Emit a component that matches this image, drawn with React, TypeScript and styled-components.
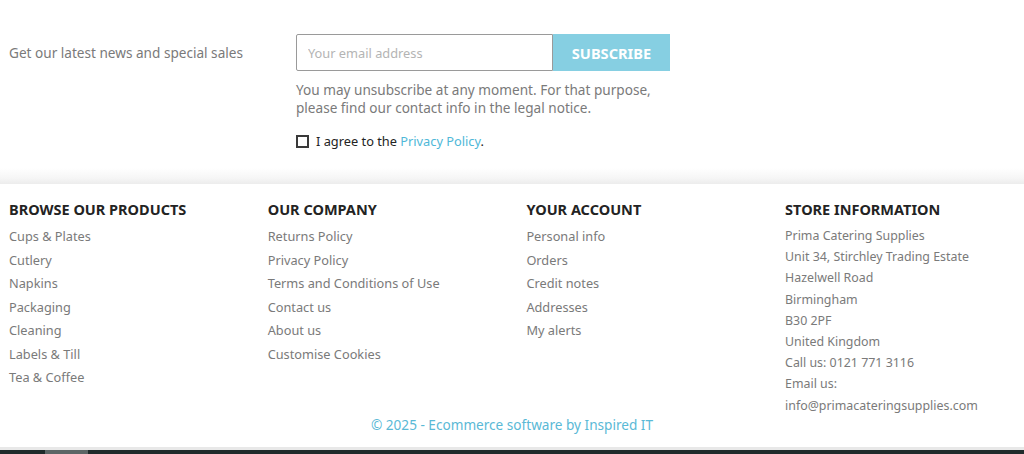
import React from 'react'
import styled, { createGlobalStyle } from 'styled-components'

const GlobalStyle = createGlobalStyle`
    html, body {
        margin: 0;
        padding: 0;
        background: #fff;
        font-family: "Noto Sans", "Open Sans", sans-serif;
        overflow: hidden;
    }
    * { box-sizing: border-box; }
`

const Page = styled.div`
    width: 1024px;
    height: 454px;
    display: flex;
    flex-direction: column;
`

const Newsletter = styled.section`
    display: flex;
    padding: 34px 0 0 9px;
    height: 184px;
    background: linear-gradient(to bottom, #fff 0, #fff 168px, #f6f6f6 178px, #ececec 184px);
`

const Pitch = styled.p`
    margin: 9px 0 0;
    width: 287px;
    font-size: 13.6px;
    color: #7a7a7a;
`

const FormCol = styled.div`
    display: flex;
    flex-direction: column;
`

const InputRow = styled.div`
    display: flex;
    height: 37px;
`

const EmailInput = styled.input`
    width: 257px;
    height: 37px;
    border: 1px solid #9a9a9a;
    border-radius: 2px 0 0 2px;
    padding: 0 11px;
    font-family: inherit;
    font-size: 12.8px;
    color: #232323;
    outline: none;
    &::placeholder { color: #b4b4b4; }
`

const SubscribeButton = styled.button`
    width: 117px;
    height: 37px;
    border: none;
    background: #86cfe2;
    color: #fff;
    font-family: inherit;
    font-weight: 700;
    font-size: 14.6px;
    text-transform: uppercase;
    padding: 0;
`

const Notice = styled.p`
    margin: 10px 0 0;
    width: 370px;
    font-size: 13.6px;
    line-height: 18px;
    color: #7a7a7a;
`

const Agree = styled.label`
    display: flex;
    align-items: center;
    gap: 7px;
    margin-top: 15px;
    font-size: 12.8px;
    color: #232323;
`

const Box = styled.span`
    width: 13px;
    height: 13px;
    border: 2px solid #3a3a3a;
`

const Link = styled.a`
    color: #4fb8d8;
    text-decoration: none;
`

const Footer = styled.footer`
    flex: 1;
    display: flex;
    flex-direction: column;
    padding: 16px 0 0 9px;
`

const Columns = styled.div`
    display: grid;
    grid-template-columns: repeat(4, 258.7px);
`

const Heading = styled.h4`
    margin: 0 0 7px;
    font-size: 14.5px;
    font-weight: 700;
    text-transform: uppercase;
    color: #232323;
    line-height: 18px;
`

const List = styled.ul`
    list-style: none;
    margin: 0;
    padding: 0;
`

const Item = styled.li`
    font-size: 12.75px;
    line-height: 23.5px;
    color: #7a7a7a;
`

const InfoList = styled.div`
    margin-top: 4px;
`

const InfoLine = styled.div`
    font-size: 12.4px;
    line-height: 21.2px;
    color: #7a7a7a;
`

const Copyright = styled.p`
    margin: -1px 0 0;
    text-align: center;
    font-size: 13.6px;
    line-height: 19px;
    color: #5ab9d6;
    padding-right: 9px;
`

const BottomLine = styled.div`
    height: 3px;
    background: #e8e8e8;
`

const TaskBar = styled.div`
    height: 4px;
    background: #1f2b2b;
    display: flex;
    padding-left: 45px;
`

const TaskItem = styled.span`
    width: 43px;
    background: #5c6666;
`

const products = ['Cups & Plates', 'Cutlery', 'Napkins', 'Packaging', 'Cleaning', 'Labels & Till', 'Tea & Coffee']
const company = ['Returns Policy', 'Privacy Policy', 'Terms and Conditions of Use', 'Contact us', 'About us', 'Customise Cookies']
const account = ['Personal info', 'Orders', 'Credit notes', 'Addresses', 'My alerts']
const store = [
    'Prima Catering Supplies',
    'Unit 34, Stirchley Trading Estate',
    'Hazelwell Road',
    'Birmingham',
    'B30 2PF',
    'United Kingdom',
    'Call us: 0121 771 3116',
    'Email us:',
    'info@primacateringsupplies.com',
]

const LinkBlock: React.FC<{ title: string, items: string[] }> = ({ title, items }) => (
    <div>
        <Heading>{title}</Heading>
        <List>
            {items.map(i => <Item key={i}>{i}</Item>)}
        </List>
    </div>
)

const App: React.FC = () => {
    return (
        <Page>
            <GlobalStyle />
            <Newsletter>
                <Pitch>Get our latest news and special sales</Pitch>
                <FormCol>
                    <InputRow>
                        <EmailInput placeholder="Your email address" />
                        <SubscribeButton>Subscribe</SubscribeButton>
                    </InputRow>
                    <Notice>You may unsubscribe at any moment. For that purpose, please find our contact info in the legal notice.</Notice>
                    <Agree>
                        <Box />
                        <span>I agree to the <Link>Privacy Policy</Link>.</span>
                    </Agree>
                </FormCol>
            </Newsletter>
            <Footer>
                <Columns>
                    <LinkBlock title="Browse our products" items={products} />
                    <LinkBlock title="Our company" items={company} />
                    <LinkBlock title="Your account" items={account} />
                    <div>
                        <Heading>Store information</Heading>
                        <InfoList>
                            {store.map(s => <InfoLine key={s}>{s}</InfoLine>)}
                        </InfoList>
                    </div>
                </Columns>
                <Copyright>© 2025 - Ecommerce software by Inspired IT</Copyright>
            </Footer>
            <BottomLine />
            <TaskBar><TaskItem /></TaskBar>
        </Page>
    )
}

export default App
